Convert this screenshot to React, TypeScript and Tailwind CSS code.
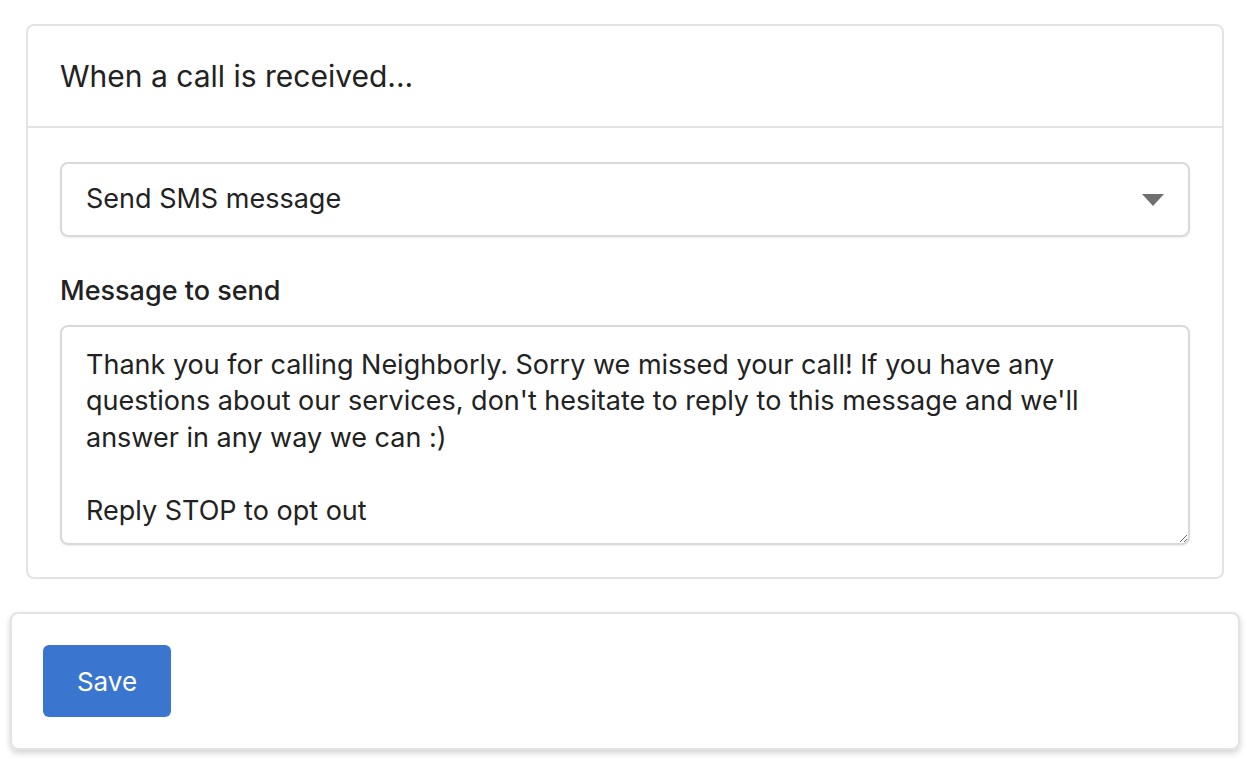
import React from "react";

const msg =
  "Thank you for calling Neighborly. Sorry we missed your call! If you have any\nquestions about our services, don't hesitate to reply to this message and we'll\nanswer in any way we can :)\n\nReply STOP to opt out";

export default function App() {
  return (
    <div
      className="w-[1250px] h-[768px] bg-white text-[#222] overflow-hidden"
      style={{ fontFamily: "Inter, 'Noto Sans', sans-serif" }}
    >
      <div className="px-[26px] pt-[24px]">
        <div className="border-2 border-[#e3e3e3] rounded-[8px]">
          <div className="h-[102px] flex items-center px-[32px] border-b-2 border-[#e3e3e3] text-[30px]">
            When a call is received...
          </div>
          <div className="px-[32px] pt-[34px] pb-[32px]">
            <div className="h-[75px] border-2 border-[#d9d9d9] rounded-[8px] shadow-[0_1px_2px_rgba(0,0,0,0.08)] flex items-center justify-between pl-[24px] pr-[24px] text-[27px]">
              <span>Send SMS message</span>
              <svg width="22" height="12" viewBox="0 0 22 12">
                <path d="M0 0 H22 L11 12 Z" fill="#707070" />
              </svg>
            </div>
            <div className="mt-[36px] text-[27px] leading-[36px] font-medium">Message to send</div>
            <textarea
              readOnly
              wrap="off"
              value={msg}
              className="mt-[16px] block w-full h-[220px] border-2 border-[#d9d9d9] rounded-[8px] shadow-[0_1px_2px_rgba(0,0,0,0.08)] pl-[24px] pr-[24px] pt-[20px] pb-[14px] text-[27px] leading-[36.4px] overflow-hidden resize-y outline-none"
              style={{ fontFamily: "Inter, 'Noto Sans', sans-serif" }}
            />
          </div>
        </div>
      </div>
      <div className="px-[10px] pt-[33px]">
        <div className="h-[138px] border-2 border-[#e3e3e3] rounded-[8px] shadow-[0_3px_6px_rgba(0,0,0,0.18)] flex items-center px-[31px]">
          <button className="w-[128px] h-[72px] rounded-[6px] bg-[#3a76cf] text-white text-[26px]">
            Save
          </button>
        </div>
      </div>
    </div>
  );
}
